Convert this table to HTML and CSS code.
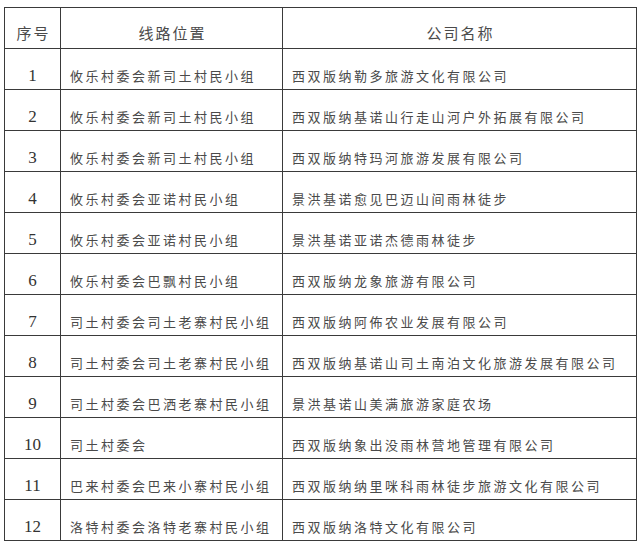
FILE: index.html
```html
<!DOCTYPE html>
<html lang="zh">
<head>
<meta charset="utf-8">
<link rel="stylesheet" href="styles.css">
</head>
<body>
<table class="route-table">
  <colgroup>
    <col class="c-no">
    <col class="c-loc">
    <col class="c-co">
  </colgroup>
  <thead>
    <tr><th>序号</th><th>线路位置</th><th>公司名称</th></tr>
  </thead>
  <tbody>
    <tr><td class="num">1</td><td>攸乐村委会新司土村民小组</td><td>西双版纳勒多旅游文化有限公司</td></tr>
    <tr><td class="num">2</td><td>攸乐村委会新司土村民小组</td><td>西双版纳基诺山行走山河户外拓展有限公司</td></tr>
    <tr><td class="num">3</td><td>攸乐村委会新司土村民小组</td><td>西双版纳特玛河旅游发展有限公司</td></tr>
    <tr><td class="num">4</td><td>攸乐村委会亚诺村民小组</td><td>景洪基诺愈见巴迈山间雨林徒步</td></tr>
    <tr><td class="num">5</td><td>攸乐村委会亚诺村民小组</td><td>景洪基诺亚诺杰德雨林徒步</td></tr>
    <tr><td class="num">6</td><td>攸乐村委会巴飘村民小组</td><td>西双版纳龙象旅游有限公司</td></tr>
    <tr><td class="num">7</td><td>司土村委会司土老寨村民小组</td><td>西双版纳阿佈农业发展有限公司</td></tr>
    <tr><td class="num">8</td><td>司土村委会司土老寨村民小组</td><td>西双版纳基诺山司土南泊文化旅游发展有限公司</td></tr>
    <tr><td class="num">9</td><td>司土村委会巴洒老寨村民小组</td><td>景洪基诺山美满旅游家庭农场</td></tr>
    <tr><td class="num">10</td><td>司土村委会</td><td>西双版纳象出没雨林营地管理有限公司</td></tr>
    <tr><td class="num">11</td><td>巴来村委会巴来小寨村民小组</td><td>西双版纳纳里咪科雨林徒步旅游文化有限公司</td></tr>
    <tr><td class="num">12</td><td>洛特村委会洛特老寨村民小组</td><td>西双版纳洛特文化有限公司</td></tr>
  </tbody>
</table>
</body>
</html>
```

FILE: styles.css
```css
html, body {
  margin: 0;
  padding: 0;
  background: #ffffff;
}
body {
  padding: 7px 0 0 4px;
  font-family: "Noto Sans CJK SC", "Liberation Serif", sans-serif;
  color: #4a4a4a;
}
.route-table {
  border-collapse: collapse;
  table-layout: fixed;
  width: 632px;
}
.c-no { width: 56px; }
.c-loc { width: 222px; }
.c-co { width: 354px; }
.route-table th,
.route-table td {
  border: 1px solid #3a3a3a;
  height: 41px;
  box-sizing: border-box;
  padding: 0 0 3px 9px;
  vertical-align: bottom;
  text-align: left;
  font-size: 13px;
  line-height: 20px;
  letter-spacing: 2.5px;
  font-weight: 400;
  white-space: nowrap;
}
.route-table th {
  text-align: center;
  padding: 0 0 5px 2px;
  font-size: 15px;
  letter-spacing: 2px;
}
.route-table td.num {
  text-align: center;
  padding: 0 0 3px 0;
  color: #333333;
  font-family: "Liberation Serif", serif;
  font-size: 17px;
  letter-spacing: 0;
}
```
